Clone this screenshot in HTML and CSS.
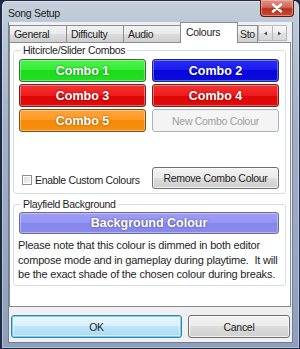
FILE: index.html
```html
<!DOCTYPE html>
<html lang="en">
<head>
    <meta charset="UTF-8">
    <meta name="viewport" content="width=device-width, initial-scale=1.0">
    <title>Song Setup</title>
    <link rel="stylesheet" href="styles.css">
</head>
<body>
    <div class="window">
        <div class="titlebar">
            <span class="title">Song Setup</span>
            <button class="close-btn" aria-label="Close">
                <svg width="12" height="10" viewBox="0 0 12 10">
                    <path d="M2 1.5 L10 8.5 M10 1.5 L2 8.5" stroke="#ffffff" stroke-width="2.4" stroke-linecap="round"/>
                </svg>
            </button>
        </div>

        <div class="client">
            <div class="tabs">
                <div class="tab">General</div>
                <div class="tab">Difficulty</div>
                <div class="tab">Audio</div>
                <div class="tab active">Colours</div>
                <div class="tab cut">Sto</div>
                <div class="tab-scroll">
                    <span class="arrow">
                        <svg width="5" height="5" viewBox="0 0 5 5"><path d="M4 0.5 L1 2.5 L4 4.5 Z" fill="#4d4d4d"/></svg>
                    </span>
                    <span class="arrow">
                        <svg width="5" height="5" viewBox="0 0 5 5"><path d="M1 0.5 L4 2.5 L1 4.5 Z" fill="#4d4d4d"/></svg>
                    </span>
                </div>
            </div>

            <div class="tab-page">
                <fieldset class="group combos">
                    <legend>Hitcircle/Slider Combos</legend>
                    <div class="combo-grid">
                        <button class="swatch green">Combo 1</button>
                        <button class="swatch blue">Combo 2</button>
                        <button class="swatch red">Combo 3</button>
                        <button class="swatch red">Combo 4</button>
                        <button class="swatch orange">Combo 5</button>
                        <button class="sys-btn new-combo" disabled>New Combo Colour</button>
                    </div>
                    <div class="combo-footer">
                        <label class="check"><span class="check-box"></span>Enable Custom Colours</label>
                        <button class="sys-btn remove">Remove Combo Colour</button>
                    </div>
                </fieldset>

                <fieldset class="group playfield">
                    <legend>Playfield Background</legend>
                    <button class="swatch lavender">Background Colour</button>
                    <p class="note">Please note that this colour is dimmed in both editor compose mode and in gameplay during playtime.&nbsp; It will be the exact shade of the chosen colour during breaks.</p>
                </fieldset>
            </div>

            <div class="footer">
                <button class="sys-btn ok">OK</button>
                <button class="sys-btn cancel">Cancel</button>
            </div>
        </div>
    </div>
</body>
</html>
```

FILE: styles.css
```css
* {
    box-sizing: border-box;
}
body {
    margin: 0;
    background-color: #1d2840;
    font-family: "Liberation Sans", Arial, sans-serif;
    font-size: 10px;
    letter-spacing: -0.3px;
    color: #1e1e1e;
}
button {
    font-family: inherit;
    font-size: 10px;
    letter-spacing: -0.3px;
    margin: 0;
    padding: 0;
    cursor: default;
}
.window {
    width: 300px;
    height: 349px;
    display: flex;
    flex-direction: column;
    padding: 0 6px 5px 6px;
    border: 1px solid #1f2a44;
    border-left-width: 2px;
    border-radius: 6px 6px 0 0;
    background: linear-gradient(to bottom, #c6d0dc 0, #bcc8d6 22px, #a1b1c7 120px, #8e9fbb 100%);
    box-shadow: inset 0 0 0 1px rgba(255,255,255,0.35);
}
.titlebar {
    height: 21px;
    display: flex;
    justify-content: space-between;
    align-items: flex-start;
}
.title {
    padding: 6px 0 0 0;
    font-size: 10.5px;
    color: #1b1b1b;
}
.close-btn {
    width: 34px;
    height: 17px;
    margin-top: -1px;
    margin-right: -1px;
    display: flex;
    align-items: center;
    justify-content: center;
    border: 1px solid #5e1a12;
    border-top: none;
    border-radius: 0 0 4px 4px;
    background: linear-gradient(to bottom, #e0958a 0, #d0675a 45%, #b8321e 55%, #c84a30 100%);
    box-shadow: inset 0 0 0 1px rgba(255,210,200,0.45);
}
.client {
    flex: 1;
    display: flex;
    flex-direction: column;
    background-color: #f0f0f0;
    border: 1px solid #6f7f98;
    border-top: none;
}

/* tab strip */
.tabs {
    height: 20px;
    display: flex;
    align-items: flex-end;
}
.tab {
    width: 58px;
    height: 17px;
    margin-right: -1px;
    padding-left: 4px;
    line-height: 16px;
    font-size: 10.5px;
    border: 1px solid #898c95;
    border-bottom: none;
    background: linear-gradient(to bottom, #f2f2f2 0, #ebebeb 50%, #dddddd 50%, #cfcfcf 100%);
    white-space: nowrap;
    overflow: hidden;
}
.tab.active {
    position: relative;
    z-index: 1;
    height: 21px;
    margin-bottom: -1px;
    padding-left: 5px;
    line-height: 18px;
    background: #ffffff;
}
.tab.cut {
    width: 21px;
    padding-left: 2px;
}
.tab-scroll {
    display: flex;
    margin-bottom: 1px;
    margin-left: 1px;
}
.arrow {
    width: 15px;
    height: 16px;
    display: flex;
    align-items: center;
    justify-content: center;
    border: 1px solid #b5b8bd;
    margin-right: -1px;
    background: linear-gradient(to bottom, #f6f6f6 0, #ececec 50%, #e0e0e0 50%, #d8d8d8 100%);
}

/* tab page */
.tab-page {
    flex: 1;
    margin: 0 1px 0 0;
    padding: 0 2px;
    border: 1px solid #898c95;
    background-color: #ffffff;
}
.group {
    width: 272px;
    margin: 0 0 0 1px;
    padding: 2px 6px 4px 5px;
    border: 1px solid #d5dfe5;
    border-radius: 3px;
}
.group legend {
    padding: 0 2px;
    margin-left: 2px;
    line-height: 14px;
    font-size: 10.5px;
    color: #1e1e1e;
}
.combo-grid {
    display: grid;
    grid-template-columns: 127px 127px;
    grid-auto-rows: 23px;
    column-gap: 6px;
    row-gap: 2px;
}
.swatch {
    border: 1px solid #555555;
    border-radius: 3px;
    font-size: 12.5px;
    letter-spacing: 0;
    font-weight: bold;
    color: #ffffff;
    text-shadow: 0 0 2px rgba(0,0,0,0.55);
    box-shadow: inset 0 0 0 1px rgba(255,255,255,0.35);
}
.swatch.green {
    border-color: #3c6b3c;
    background: linear-gradient(to bottom, #4cf24c 0, #35ec35 50%, #1cdc1c 50%, #20e020 100%);
}
.swatch.blue {
    border-color: #24305c;
    background: linear-gradient(to bottom, #2c2cf4 0, #1a1aee 50%, #0606dc 50%, #0a0ae2 100%);
}
.swatch.red {
    border-color: #6a2424;
    background: linear-gradient(to bottom, #f43232 0, #ee1c1c 50%, #dc0606 50%, #e20a0a 100%);
}
.swatch.orange {
    border-color: #7a5020;
    background: linear-gradient(to bottom, #ffa43a 0, #ff9a22 50%, #f48a06 50%, #f8900e 100%);
}
.swatch.lavender {
    display: block;
    width: 260px;
    height: 22px;
    border-color: #6a6a96;
    background: linear-gradient(to bottom, #9e9ef6 0, #9494f2 50%, #8686ec 50%, #8a8aee 100%);
}
.sys-btn {
    border: 1px solid #707070;
    border-radius: 3px;
    font-size: 10.5px;
    color: #1e1e1e;
    background: linear-gradient(to bottom, #f2f2f2 0, #ebebeb 50%, #dddddd 50%, #cfcfcf 100%);
    box-shadow: inset 0 0 0 1px rgba(255,255,255,0.7);
}
.sys-btn.new-combo {
    border-color: #adb2b5;
    color: #a0a0a0;
    background: #f4f4f4;
    box-shadow: none;
}
.combo-footer {
    display: flex;
    justify-content: space-between;
    align-items: center;
    margin-top: 35px;
}
.check {
    display: flex;
    align-items: center;
    gap: 3px;
    margin-left: 3px;
    margin-top: 3px;
    font-size: 10.5px;
}
.check-box {
    width: 10px;
    height: 10px;
    border: 1px solid #8f8f8f;
    background: linear-gradient(135deg, #dcdcdc 0, #f6f6f6 100%);
    box-shadow: inset 0 0 0 1px #ffffff;
}
.sys-btn.remove {
    width: 127px;
    height: 22px;
}
.group.playfield {
    margin-top: 3px;
    padding-top: 1px;
    padding-bottom: 3px;
}
.note {
    margin: 4px -6px 0 -1px;
    line-height: 14.5px;
    font-size: 11px;
    letter-spacing: -0.2px;
}

/* dialog buttons */
.footer {
    height: 35px;
    display: flex;
    gap: 6px;
    padding: 8px 0 0 2px;
}
.footer .sys-btn {
    height: 23px;
}
.sys-btn.ok {
    width: 171px;
    border-color: #3c7fb1;
    background: linear-gradient(to bottom, #eaf6fd 0, #d9f0fc 50%, #bee6fd 50%, #a7d9f5 100%);
    box-shadow: inset 0 0 0 1px #6ed4f7, inset 0 0 0 2px rgba(255,255,255,0.5);
}
.sys-btn.cancel {
    width: 102px;
}
```
